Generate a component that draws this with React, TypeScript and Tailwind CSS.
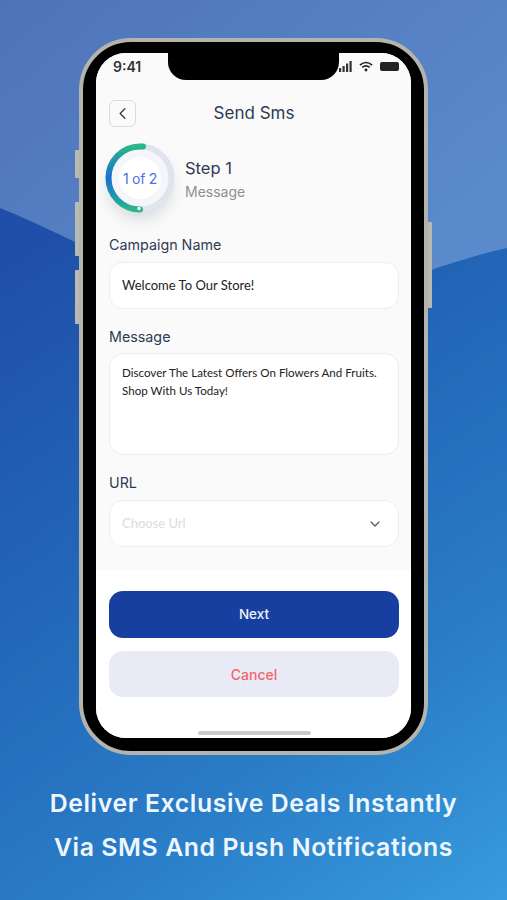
import { ChevronDown, ChevronLeft } from "lucide-react";

const poppins = "font-['Inter','Liberation_Sans',sans-serif]";
const lato = "font-['Lato','Liberation_Sans',sans-serif]";

function Background() {
  return (
    <svg className="absolute inset-0" width="507" height="900" viewBox="0 0 507 900">
      <defs>
        <linearGradient id="bgLow" gradientUnits="userSpaceOnUse" x1="40" y1="230" x2="500" y2="900">
          <stop offset="0" stopColor="#1f4fa8" />
          <stop offset="0.35" stopColor="#2265b6" />
          <stop offset="0.7" stopColor="#2a7cc7" />
          <stop offset="1" stopColor="#379bdd" />
        </linearGradient>
        <linearGradient id="bgTop" x1="0" y1="0" x2="1" y2="0.7">
          <stop offset="0" stopColor="#4f73b9" />
          <stop offset="1" stopColor="#5b8bcd" />
        </linearGradient>
      </defs>
      <rect width="507" height="900" fill="url(#bgLow)" />
      <path d="M0 0H507V248C480 254 455 262 431 270C340 300 270 300 200 295C140 280 90 250 75 242C50 230 25 218 0 208Z" fill="url(#bgTop)" />
    </svg>
  );
}

function StepRing() {
  return (
    <div className="relative w-[70px] h-[70px] shrink-0">
      <div className="absolute inset-[4px] rounded-full shadow-[0_9px_16px_rgba(60,70,100,0.2)]" />
      <svg className="absolute inset-0" width="70" height="70" viewBox="0 0 70 70">
        <defs>
          <linearGradient id="ring" x1="0" y1="0" x2="0" y2="1">
            <stop offset="0" stopColor="#2ab78a" />
            <stop offset="0.2" stopColor="#2298a8" />
            <stop offset="0.5" stopColor="#1a70d2" />
            <stop offset="0.8" stopColor="#2298a8" />
            <stop offset="1" stopColor="#2ab78a" />
          </linearGradient>
        </defs>
        <circle cx="35" cy="35" r="32" fill="#f4f6f9" />
        <circle cx="35" cy="35" r="31.5" fill="none" stroke="#dfe5ec" strokeWidth="6" />
        <path d="M38 3.600A31.500 31.500 0 0 0 35 3.500A31.500 31.500 0 0 0 35 66.500" fill="none" stroke="url(#ring)" strokeWidth="6" strokeLinecap="round" />
        <circle cx="34" cy="65.500" r="1.700" fill="#ffffff" />
        <circle cx="35" cy="35" r="21" fill="#ffffff" />
      </svg>
      <span className={`absolute inset-0 flex items-center justify-center text-[14px] text-[#4a72e6] tracking-[-0.3px] ${poppins}`}>
        1 of 2
      </span>
    </div>
  );
}

function Label({ children }: { children: string }) {
  return <div className={`text-[14.300px] leading-[20px] text-[#2f3a55] ${poppins}`}>{children}</div>;
}

export default function App() {
  return (
    <div className="relative w-[507px] h-[900px] overflow-hidden">
      <Background />
      <div className="relative flex flex-col items-center pt-[38px]">
        {/* Phone */}
        <div className="relative w-[349px] h-[717px] rounded-[52px] bg-black border-[4px] border-[#b3b4ab] pt-[11px] pb-[13px] px-[13px]">
          {/* Side buttons */}
          <div className="absolute left-[-8px] top-[108px] w-[4px] h-[28px] rounded-l-[1px] bg-[#b9bab2]" />
          <div className="absolute left-[-8px] top-[160px] w-[4px] h-[54px] rounded-l-[1px] bg-[#b9bab2]" />
          <div className="absolute left-[-8px] top-[228px] w-[4px] h-[54px] rounded-l-[1px] bg-[#b9bab2]" />
          <div className="absolute right-[-8px] top-[180px] w-[4px] h-[86px] rounded-r-[1px] bg-[#b9bab2]" />

          <div className="relative h-full rounded-[30px] overflow-hidden bg-white flex flex-col">
            {/* Notch */}
            <div className="absolute top-0 left-[72px] w-[171px] h-[27px] bg-black rounded-b-[18px]" />

            <div className="h-[517px] bg-[#fafafa] flex flex-col pl-[13px] pr-[12px]">
              <div className="h-[27px] flex items-center justify-between pl-[4px]">
                <span className={`text-[14px] font-semibold text-[#333] ${poppins}`}>9:41</span>
                <div className="flex items-center gap-[7px]">
                  <svg width="13" height="11" viewBox="0 0 13 11" fill="#333">
                    <rect x="0" y="7" width="2.200" height="4" />
                    <rect x="3.500" y="5" width="2.200" height="6" />
                    <rect x="7" y="2.500" width="2.200" height="8.500" />
                    <rect x="10.500" y="0" width="2.200" height="11" />
                  </svg>
                  <svg width="14" height="11" viewBox="0 0 15 11" fill="none" stroke="#222" strokeWidth="1.700">
                    <path d="M1 4C5 .6 10 .6 14 4" />
                    <path d="M3.500 6.500C6 4.500 9 4.500 11.500 6.500" />
                    <circle cx="7.500" cy="9.300" r="0.700" fill="#222" />
                  </svg>
                  <div className="w-[19px] h-[9px] rounded-[2px] bg-[#222]" />
                </div>
              </div>

              {/* Header */}
              <div className="relative flex items-center justify-center h-[27px] mt-[20px]">
                <div className="absolute left-0 w-[27px] h-[27px] rounded-[6px] border border-[#d7dbe8] flex items-center justify-center">
                  <ChevronLeft size={19} className="text-[#333]" strokeWidth={1.500} />
                </div>
                <span className={`text-[17px] text-[#2f3a55] ${poppins}`}>Send Sms</span>
              </div>

              {/* Step */}
              <div className="flex items-center gap-[10px] mt-[16px] -ml-[4px]">
                <StepRing />
                <div className="pt-[4px]">
                  <div className={`text-[16.500px] leading-[24px] text-[#2f3a55] ${poppins}`}>Step 1</div>
                  <div className={`text-[14px] leading-[24px] text-[#8d8f96] ${poppins}`}>Message</div>
                </div>
              </div>

              <div className="mt-[22px]">
                <Label>Campaign Name</Label>
              </div>
              <div className={`mt-[7px] h-[47px] bg-white border border-[#eeeeee] rounded-[14px] flex items-center px-[12px] text-[13px] text-[#222] ${lato}`}>
                Welcome To Our Store!
              </div>

              <div className="mt-[18px]">
                <Label>Message</Label>
              </div>
              <div className={`mt-[6px] h-[102px] bg-white border border-[#eeeeee] rounded-[14px] px-[12px] pt-[10px] text-[11.600px] leading-[18px] text-[#222] ${lato}`}>
                Discover The Latest Offers On Flowers And Fruits. Shop With Us Today!
              </div>

              <div className="mt-[18px]">
                <Label>URL</Label>
              </div>
              <div className={`mt-[7px] h-[47px] bg-white border border-[#eeeeee] rounded-[14px] flex items-center justify-between pl-[12px] pr-[15px] text-[13px] text-[#dcdcdc] ${lato}`}>
                Choose Url
                <ChevronDown size={16} className="text-[#555]" strokeWidth={1.800} />
              </div>
            </div>

            {/* Buttons */}
            <div className="flex-1 bg-white pl-[13px] pr-[12px] pt-[21px] flex flex-col">
              <div className={`h-[47px] rounded-[14px] bg-[#173f9f] flex items-center justify-center text-[13.500px] font-medium text-[#f2f5ff] ${poppins}`}>
                Next
              </div>
              <div className={`mt-[13px] h-[46px] rounded-[14px] bg-[#e8ebf5] flex items-center justify-center text-[14px] font-medium text-[#f2656f] ${poppins}`}>
                Cancel
              </div>
              <div className="mt-auto mb-[3px] mx-auto w-[113px] h-[4px] rounded-full bg-[#c9c9c9]" />
            </div>
          </div>
        </div>

        {/* Caption */}
        <div className={`mt-[26px] text-center text-[24.800px] leading-[44px] font-semibold tracking-[0.6px] text-[#eef7ff] whitespace-nowrap ${poppins}`}>
          <div>Deliver Exclusive Deals Instantly</div>
          <div>Via SMS And Push Notifications</div>
        </div>
      </div>
    </div>
  );
}
